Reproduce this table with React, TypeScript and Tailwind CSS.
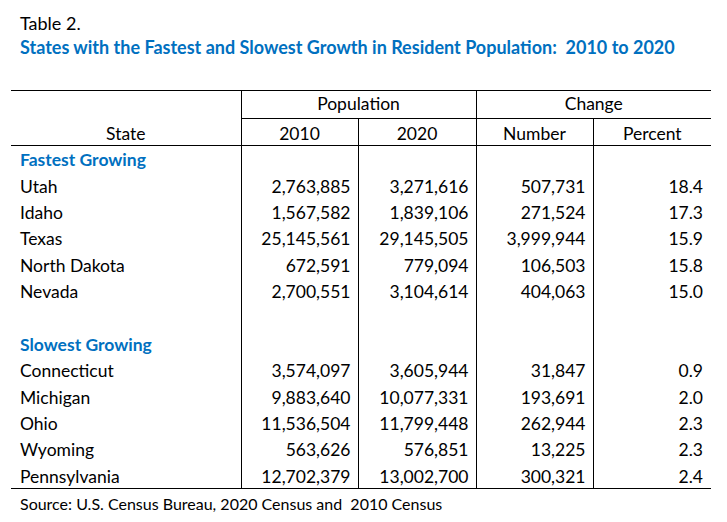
const fastest = [
  ["Utah", "2,763,885", "3,271,616", "507,731", "18.4"],
  ["Idaho", "1,567,582", "1,839,106", "271,524", "17.3"],
  ["Texas", "25,145,561", "29,145,505", "3,999,944", "15.9"],
  ["North Dakota", "672,591", "779,094", "106,503", "15.8"],
  ["Nevada", "2,700,551", "3,104,614", "404,063", "15.0"],
];

const slowest = [
  ["Connecticut", "3,574,097", "3,605,944", "31,847", "0.9"],
  ["Michigan", "9,883,640", "10,077,331", "193,691", "2.0"],
  ["Ohio", "11,536,504", "11,799,448", "262,944", "2.3"],
  ["Wyoming", "563,626", "576,851", "13,225", "2.3"],
  ["Pennsylvania", "12,702,379", "13,002,700", "300,321", "2.4"],
];

function DataRow({ row }: { row: string[] }) {
  return (
    <tr className="h-[26.4px]">
      <td className="border-r border-black pl-[9px] pt-[3px] text-left">{row[0]}</td>
      <td className="border-r border-black pr-[7px] pt-[3px] text-right">{row[1]}</td>
      <td className="border-r border-black pr-[7px] pt-[3px] text-right">{row[2]}</td>
      <td className="border-r border-black pr-[7px] pt-[3px] text-right">{row[3]}</td>
      <td className="pr-[8px] pt-[3px] text-right">{row[4]}</td>
    </tr>
  );
}

function SectionRow({ label }: { label: string }) {
  return (
    <tr className="h-[26.4px]">
      <td className="border-r border-black pl-[9px] pt-[3px] text-left font-bold text-[#0070c0]">{label}</td>
      <td className="border-r border-black" />
      <td className="border-r border-black" />
      <td className="border-r border-black" />
      <td />
    </tr>
  );
}

export default function App() {
  return (
    <div className="h-[522px] w-[727px] bg-white pt-[13px] text-[17.5px] text-black [font-family:Lato,'Liberation_Sans',sans-serif]">
      <div className="pl-[20px] text-[18px] leading-[20px]">Table 2.</div>
      <div className="mt-[4px] pl-[20px] text-[18px] font-bold leading-[20px] text-[#0070c0]">
        States with the Fastest and Slowest Growth in Resident Population:&nbsp; 2010 to 2020
      </div>

      <table className="ml-[11px] mt-[33px] w-[700px] table-fixed border-collapse leading-[20px]">
        <colgroup>
          <col className="w-[230px]" />
          <col className="w-[117px]" />
          <col className="w-[118px]" />
          <col className="w-[117px]" />
          <col className="w-[118px]" />
        </colgroup>
        <thead>
          <tr className="h-[28px] border-t border-black">
            <th rowSpan={2} className="border-r border-b border-black pb-[1px] align-bottom text-center font-normal">
              State
            </th>
            <th colSpan={2} className="border-r border-b border-black pb-[1px] text-center font-normal">
              Population
            </th>
            <th colSpan={2} className="border-b border-black pb-[1px] text-center font-normal">
              Change
            </th>
          </tr>
          <tr className="h-[27px] border-b border-black">
            <th className="border-r border-black pt-[3px] text-center font-normal">2010</th>
            <th className="border-r border-black pt-[3px] text-center font-normal">2020</th>
            <th className="border-r border-black pt-[3px] text-center font-normal">Number</th>
            <th className="pt-[3px] text-center font-normal">Percent</th>
          </tr>
        </thead>
        <tbody className="border-b border-black">
          <SectionRow label="Fastest Growing" />
          {fastest.map((r) => (
            <DataRow key={r[0]} row={r} />
          ))}
          <tr className="h-[26.4px]">
            <td className="border-r border-black" />
            <td className="border-r border-black" />
            <td className="border-r border-black" />
            <td className="border-r border-black" />
            <td />
          </tr>
          <SectionRow label="Slowest Growing" />
          {slowest.map((r) => (
            <DataRow key={r[0]} row={r} />
          ))}
        </tbody>
      </table>

      <div className="mt-[5px] pl-[20px] text-[16px] leading-[20px]">
        Source: U.S. Census Bureau, 2020 Census and&nbsp; 2010 Census
      </div>
    </div>
  );
}
